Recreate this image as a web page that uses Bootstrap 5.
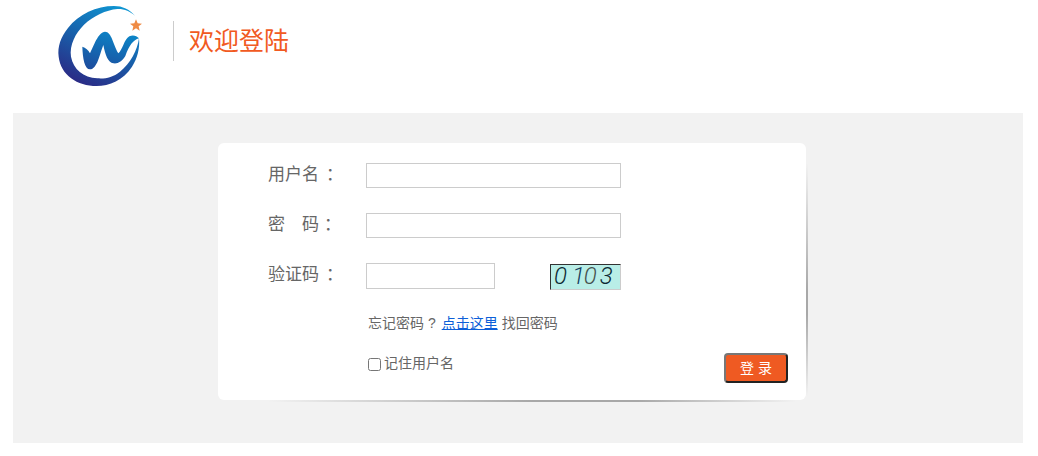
<!DOCTYPE html>
<html lang="zh">
<head>
  <meta charset="UTF-8" />
  <title>欢迎登陆</title>
  <link href="https://cdn.jsdelivr.net/npm/bootstrap@5.3.0/dist/css/bootstrap.min.css" rel="stylesheet">
  <style>
    body { font-family: "Liberation Sans", "Noto Sans CJK SC", sans-serif; color: #666; background: #fff; }
    .top-bar { height: 113px; padding-left: 50px; }
    .top-title { margin-left: 23px; padding-left: 15px; height: 40px; margin-top: 21px; border-left: 1px solid #ccc; font-size: 25px; line-height: 40px; color: #f15a22; }
    .gray-panel { margin: 0 15px 0 13px; height: 330px; background: #f2f2f2; padding-top: 30px; }
    .login-box { position: relative; width: 588px; height: 257px; margin-left: 205px; background: #fff; border-radius: 6px; padding: 20px 0 0 50px; }
    .login-box::before { content: ""; position: absolute; right: -2px; top: 20px; bottom: 4px; width: 2px; background: linear-gradient(to bottom, transparent, #a8a8a8 55%, #a8a8a8 65%, transparent); }
    .login-box::after { content: ""; position: absolute; left: 50px; right: 10px; bottom: -2px; height: 2px; background: linear-gradient(to right, transparent, #a8a8a8 50%, #a8a8a8 70%, transparent); }
    .form-line { height: 50px; }
    .form-line label { width: 98px; font-size: 17px; line-height: 24px; color: #666; }
    .form-line label b { font-weight: 400; margin-left: 7px; }
    .form-line label i { font-style: normal; margin-left: 17px; }
    .form-line label i + b { margin-left: 5px; }
    .plain-input { width: 255px; height: 25px; border: 1px solid #ccc; padding: 0 4px; outline: 0; background: #fff; }
    .plain-input.short-input { width: 129px; height: 26px; }
    .captcha-pic { width: 71px; height: 26px; margin-left: 55px; margin-top: 1px; background: #b9eee7; border-top: 1px solid #333; border-left: 1px solid #333; border-right: 1px solid #ccc; border-bottom: 1px solid #ccc; font: italic 300 24px/23px Roboto, sans-serif; color: #0c2a33; padding-left: 3px; white-space: nowrap; }
    .captcha-pic span { margin-right: 5px; }
    .captcha-pic .cap-one { color: #173f60; margin-right: -1px; }
    .captcha-pic .cap-two { color: #46524e; margin-right: 3px; }
    .small-line { margin-left: 100px; font-size: 14px; line-height: 20px; color: #666; }
    .small-line a { color: #0d5fd8; margin: 0 4px 0 6px; }
    .bottom-line { margin-top: 20px; margin-right: 18px; }
    .remember { margin: 0 0 0 100px; font-size: 14px; line-height: 20px; color: #666; }
    .remember input { width: 13px; height: 13px; margin: 0 3px 0 0; vertical-align: -3px; }
    .login-btn { width: 64px; height: 30px; padding: 0; background: #ef5a22; color: #fff; font-size: 14px; border: 2px solid; border-color: #777 #222 #222 #777; border-radius: 4px; }
  </style>
</head>
<body class="m-0">
  <div class="top-bar d-flex align-items-start">
    <svg width="100" height="96" viewBox="30 0 300 288" xmlns="http://www.w3.org/2000/svg">
      <defs>
        <linearGradient id="logoRing" x1="0.8" y1="0" x2="0.3" y2="1">
          <stop offset="0" stop-color="#0f97d3"/>
          <stop offset="0.5" stop-color="#1762ac"/>
          <stop offset="1" stop-color="#2b2a85"/>
        </linearGradient>
        <linearGradient id="logoWave" x1="0.7" y1="0" x2="0.3" y2="1">
          <stop offset="0" stop-color="#0b86c8"/>
          <stop offset="1" stop-color="#1c4f9f"/>
        </linearGradient>
      </defs>
      <path fill="url(#logoRing)" d="M285 47C268 28 248 18 222 18C170 18 116 42 84 84C62 112 52 140 56 170C62 225 112 258 170 258C208 258 250 240 276 200C292 176 300 145 297 115C292 150 272 190 240 215C218 232 196 237 172 235C130 232 100 208 93 170C88 135 106 100 132 74C160 48 198 30 232 27C252 26 270 34 285 47Z"/>
      <path fill="url(#logoWave)" d="M127 140C137 143 145 150 150 160C160 140 175 95 195 95C215 95 220 135 235 160C248 150 252 118 268 109C280 104 290 108 297 115C280 120 268 135 256 168C246 184 234 192 220 190C204 188 196 165 190 135C180 160 172 208 150 208C134 208 128 175 127 140Z"/>
      <path fill="#ef8b45" d="M288 58l5 12 13 1-10 8 3 13-11-7-11 7 3-13-10-8 13-1z"/>
    </svg>
    <div class="top-title">欢迎登陆</div>
  </div>
  <div class="gray-panel">
    <form class="login-box">
      <div class="form-line d-flex">
        <label>用户名<b>：</b></label>
        <input class="plain-input" type="text">
      </div>
      <div class="form-line d-flex">
        <label>密<i>码</i><b>：</b></label>
        <input class="plain-input" type="password">
      </div>
      <div class="form-line d-flex">
        <label>验证码<b>：</b></label>
        <input class="plain-input short-input" type="text">
        <div class="captcha-pic"><span>0</span><span class="cap-one">1</span><span class="cap-two">0</span>3</div>
      </div>
      <div class="small-line">忘记密码 ?<a href="#">点击这里</a>找回密码</div>
      <div class="bottom-line d-flex justify-content-between align-items-start">
        <label class="remember"><input type="checkbox">记住用户名</label>
        <button class="login-btn" type="button">登 录</button>
      </div>
    </form>
  </div>
  <script src="https://cdn.jsdelivr.net/npm/bootstrap@5.3.0/dist/js/bootstrap.bundle.min.js"></script>
</body>
</html>
